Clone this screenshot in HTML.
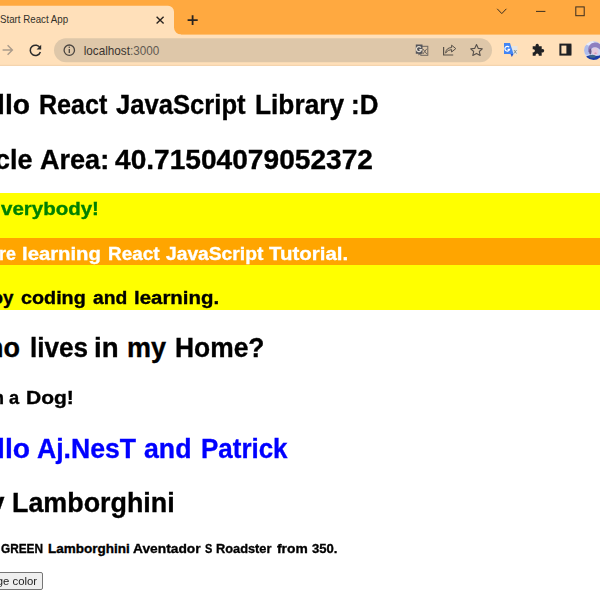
<!DOCTYPE html>
<html><head><meta charset="utf-8"><style>
html,body{margin:0;padding:0;width:600px;height:600px;overflow:hidden;background:#fff;position:relative}
.ln,.lnr{position:absolute;font-family:"Liberation Sans",sans-serif;white-space:pre;line-height:1;transform-origin:0 0}
.ln{font-weight:bold;-webkit-text-stroke-color:currentColor}
.lnr{font-weight:normal;color:#222!important}
.pre{position:absolute;right:100%;top:0}
</style></head><body>
<svg style="position:absolute;left:0;top:0" width="600" height="66" viewBox="0 0 600 66">
<rect x="0" y="0" width="600" height="35" fill="#ffa940"/>
<rect x="0" y="34.6" width="600" height="31.4" fill="#ffe0ba"/>
<path d="M-10 36 L-10 5.7 L168 5.7 A6 6 0 0 1 174 11.7 L174 27.6 A7 7 0 0 0 181 34.6 L181 36 Z" fill="#ffe0ba"/>
<rect x="0" y="64.8" width="600" height="1" fill="#f2d2ab"/>
<rect x="54" y="38.3" width="438" height="24" rx="12" fill="#dec7a9"/>
<!-- tab title -->
<text x="0" y="23.5" transform="scale(0.975,1)" font-family="Liberation Sans" font-size="10" fill="#333029">Start React App</text>
<!-- close x -->
<path d="M156.6 16.8 L163.6 23.6 M163.6 16.8 L156.6 23.6" stroke="#2a2420" stroke-width="1.4" fill="none"/>
<!-- new tab + -->
<path d="M187.6 20.1 H197.7 M192.6 15.2 V25" stroke="#2a2420" stroke-width="1.8" fill="none"/>
<!-- window controls -->
<path d="M497.2 8.8 L501.8 13.6 L506.4 8.8" stroke="#3b2e20" stroke-width="1" fill="none"/>
<path d="M536 11.4 H545.4" stroke="#3b2e20" stroke-width="1" fill="none"/>
<rect x="575.8" y="6.9" width="8.4" height="8.8" stroke="#3b2e20" stroke-width="1" fill="none"/>
<!-- forward arrow -->
<path d="M2.6 50 H12.4 M7.6 45.2 L12.4 50 L7.6 54.8" stroke="#ab9c8c" stroke-width="1.4" fill="none"/>
<!-- reload -->
<path d="M40.2 48.2 A5.2 5.2 0 1 0 40.4 52" stroke="#2b2b2b" stroke-width="1.5" fill="none"/>
<path d="M41.2 44.8 L41.2 49.4 L36.6 49.4 Z" fill="#2b2b2b"/>
<!-- info icon -->
<circle cx="69.3" cy="50.2" r="5.2" stroke="#4a4540" stroke-width="1.3" fill="none"/>
<rect x="68.65" y="49" width="1.3" height="4" fill="#4a4540"/>
<rect x="68.65" y="46.6" width="1.3" height="1.3" fill="#4a4540"/>
<!-- url -->
<text x="90" y="54.6" transform="scale(0.93,1)" font-family="Liberation Sans" font-size="12.6" fill="#3a3430">localhost<tspan fill="#625a52">:3000</tspan></text>
<!-- translate omnibox icon -->
<rect x="420.8" y="46.3" width="7" height="9" stroke="#6b6560" stroke-width="1" fill="none"/>
<path d="M415.8 44.6 H422.5 V53.7 H420.5 L418.5 55.5 V53.7 H415.8 Z" fill="#55555a"/>
<path d="M420.9 47.6 A2.5 2.5 0 1 0 421.4 49.6 H419.3" stroke="#e4dccf" stroke-width="1.2" fill="none"/>
<path d="M422.8 48.8 L426.8 54 M426.8 48.8 L422.8 54" stroke="#6b6560" stroke-width="1"/>
<!-- share -->
<path d="M443.6 47 V55 H453.2" stroke="#575048" stroke-width="1.2" fill="none"/>
<path d="M445.6 53 Q446.2 47.6 451.6 47.6 L451.6 45.2 L455.8 48.6 L451.6 52 L451.6 49.6 Q447.8 49.6 445.6 53 Z" stroke="#575048" stroke-width="1" fill="none" stroke-linejoin="round"/>
<!-- star -->
<path d="M476.5 44.6 L478.3 48.4 L482.3 48.8 L479.3 51.5 L480.2 55.4 L476.5 53.4 L472.8 55.4 L473.7 51.5 L470.7 48.8 L474.7 48.4 Z" stroke="#57504a" stroke-width="1.1" fill="none" stroke-linejoin="round"/>
<!-- google translate ext -->
<path d="M511.5 46 H517.5 V54.5 H511.5 Z" fill="#e6e6e6"/>
<path d="M514 50 L516.5 53.5 M516.5 50 L514 53.5" stroke="#7a8a8a" stroke-width="0.9"/>
<path d="M504 43 H510 L513.5 54 H504 Z" fill="#4285f4"/>
<path d="M510.5 54 H513.5 L511.8 57 Z" fill="#2a56c6"/>
<path d="M509.2 47.2 A2.4 2.4 0 1 0 509.6 49.4 H507.6" stroke="#fff" stroke-width="1.2" fill="none"/>
<!-- puzzle -->
<path d="M532.7 46.3 H535.7 A1.7 1.7 0 1 1 538.7 46.3 H541.7 V49.3 A1.7 1.7 0 1 1 541.7 52.3 V55.7 H538.7 A1.6 1.6 0 1 0 535.7 55.7 H532.7 V52.3 A1.6 1.6 0 1 0 532.7 49.3 Z" fill="#202124"/>
<!-- sidebar -->
<rect x="560.4" y="44.6" width="10" height="10" stroke="#202124" stroke-width="2" fill="none"/>
<rect x="566.4" y="44.6" width="4.8" height="10" fill="#202124"/>
<!-- avatar -->
<defs>
<clipPath id="av"><circle cx="593.5" cy="50.5" r="9.5"/></clipPath>
<radialGradient id="avbg" cx="0.3" cy="0.3" r="0.8"><stop offset="0" stop-color="#e8eefa"/><stop offset="1" stop-color="#8fa6d8"/></radialGradient>
</defs>
<filter id="avb" x="580" y="38" width="26" height="26" filterUnits="userSpaceOnUse"><feGaussianBlur stdDeviation="0.6"/></filter>
<g clip-path="url(#av)"><g filter="url(#avb)">
<rect x="582" y="39" width="23" height="23" fill="#cdd6f2"/>
<ellipse cx="587" cy="50" rx="3" ry="5" fill="#aebbea"/>
<ellipse cx="590" cy="43" rx="4" ry="2.5" fill="#e6eafa"/>
<path d="M588 52 Q587.5 43 595 42.5 Q601 42.5 602 48 L602 52 Q598 46 593 47.5 Q590 49 590.5 53 Z" fill="#8e7fbf"/>
<ellipse cx="595" cy="51.5" rx="3.3" ry="3.8" fill="#e3cade"/>
<ellipse cx="595.5" cy="53.2" rx="1.2" ry="0.6" fill="#d88aa6"/>
<ellipse cx="590.3" cy="51.5" rx="1.2" ry="3" fill="#6c5a8a"/>
<path d="M584 58 Q588 54.5 592 55.5 Q597 57 603 54 V62 H584 Z" fill="#1c3ca6"/>
<ellipse cx="592.5" cy="56.3" rx="3.2" ry="1.5" fill="#3e6688"/>
</g></g>
</svg>

<div style="position:absolute;left:0;top:193.2px;width:600px;height:116.6px;background:#ffff00"></div>
<div style="position:absolute;left:0;top:238px;width:600px;height:27.1px;background:#ffa500"></div>
<div class="ln" style="left:4.90px;top:91.80px;font-size:27px;color:#000;transform:scaleX(1.048);-webkit-text-stroke-width:0.35px"><span class="pre">Hel</span>lo</div>
<div class="ln" style="left:38.57px;top:91.80px;font-size:27px;color:#000;transform:scaleX(0.929);-webkit-text-stroke-width:0.35px">React</div>
<div class="ln" style="left:115.70px;top:91.80px;font-size:27px;color:#000;transform:scaleX(0.949);-webkit-text-stroke-width:0.35px">JavaScript</div>
<div class="ln" style="left:254.73px;top:91.80px;font-size:27px;color:#000;transform:scaleX(0.974);-webkit-text-stroke-width:0.35px">Library</div>
<div class="ln" style="left:351.38px;top:91.80px;font-size:27px;color:#000;transform:scaleX(0.962);-webkit-text-stroke-width:0.35px">:D</div>
<div class="ln" style="left:10.41px;top:146.60px;font-size:27px;color:#000;transform:scaleX(0.995);-webkit-text-stroke-width:0.35px"><span class="pre">Circ</span>le</div>
<div class="ln" style="left:39.90px;top:146.60px;font-size:27px;color:#000;transform:scaleX(1.002);-webkit-text-stroke-width:0.35px">Area:</div>
<div class="ln" style="left:115.30px;top:146.60px;font-size:27px;color:#000;transform:scaleX(1.041);-webkit-text-stroke-width:0.35px">40.71504079052372</div>
<div class="ln" style="left:0.50px;top:200.00px;font-size:18.8px;color:#008000;transform:scaleX(1.091);-webkit-text-stroke-width:0.35px">verybody!</div>
<div class="ln" style="left:5.50px;top:244.80px;font-size:18.8px;color:#fff;transform:scaleX(0.950);-webkit-text-stroke-width:0.35px"><span class="pre">We ar</span>e</div>
<div class="ln" style="left:21.72px;top:244.80px;font-size:18.8px;color:#fff;transform:scaleX(1.080);-webkit-text-stroke-width:0.35px">learning</div>
<div class="ln" style="left:107.99px;top:244.80px;font-size:18.8px;color:#fff;transform:scaleX(1.006);-webkit-text-stroke-width:0.35px">React</div>
<div class="ln" style="left:165.70px;top:244.80px;font-size:18.8px;color:#fff;transform:scaleX(1.024);-webkit-text-stroke-width:0.35px">JavaScript</div>
<div class="ln" style="left:269.00px;top:244.80px;font-size:18.8px;color:#fff;transform:scaleX(1.090);-webkit-text-stroke-width:0.35px">Tutorial.</div>
<div class="ln" style="left:3.00px;top:288.50px;font-size:18.8px;color:#000;transform:scaleX(1.000);-webkit-text-stroke-width:0.35px"><span class="pre">Enjo</span>y</div>
<div class="ln" style="left:20.50px;top:288.50px;font-size:18.8px;color:#000;transform:scaleX(1.052);-webkit-text-stroke-width:0.35px">coding</div>
<div class="ln" style="left:92.80px;top:288.50px;font-size:18.8px;color:#000;transform:scaleX(1.027);-webkit-text-stroke-width:0.35px">and</div>
<div class="ln" style="left:134.31px;top:288.50px;font-size:18.8px;color:#000;transform:scaleX(1.087);-webkit-text-stroke-width:0.35px">learning.</div>
<div class="ln" style="left:3.50px;top:335.00px;font-size:27px;color:#000;transform:scaleX(1.000);-webkit-text-stroke-width:0.35px"><span class="pre">Wh</span>o</div>
<div class="ln" style="left:29.86px;top:335.00px;font-size:27px;color:#000;transform:scaleX(0.968);-webkit-text-stroke-width:0.35px">lives</div>
<div class="ln" style="left:93.95px;top:335.00px;font-size:27px;color:#000;transform:scaleX(1.024);-webkit-text-stroke-width:0.35px">in</div>
<div class="ln" style="left:127.00px;top:335.00px;font-size:27px;color:#000;transform:scaleX(1.000);-webkit-text-stroke-width:0.35px">my</div>
<div class="ln" style="left:174.52px;top:335.00px;font-size:27px;color:#000;transform:scaleX(0.978);-webkit-text-stroke-width:0.35px">Home?</div>
<div class="ln" style="left:9.30px;top:389.30px;font-size:18.8px;color:#000;transform:scaleX(0.973);-webkit-text-stroke-width:0.35px"><span class="pre">I'm </span>a</div>
<div class="ln" style="left:26.18px;top:389.30px;font-size:18.8px;color:#000;transform:scaleX(1.118);-webkit-text-stroke-width:0.35px">Dog!</div>
<div class="ln" style="left:4.90px;top:435.50px;font-size:27px;color:#00f;transform:scaleX(1.048);-webkit-text-stroke-width:0.35px"><span class="pre">Hel</span>lo</div>
<div class="ln" style="left:36.52px;top:435.50px;font-size:27px;color:#00f;transform:scaleX(0.985);-webkit-text-stroke-width:0.35px">Aj.NesT</div>
<div class="ln" style="left:144.01px;top:435.50px;font-size:27px;color:#00f;transform:scaleX(0.989);-webkit-text-stroke-width:0.35px">and</div>
<div class="ln" style="left:201.04px;top:435.50px;font-size:27px;color:#00f;transform:scaleX(0.961);-webkit-text-stroke-width:0.35px">Patrick</div>
<div class="ln" style="left:11.50px;top:490.00px;font-size:27px;color:#000;transform:scaleX(0.995);-webkit-text-stroke-width:0.35px"><span class="pre">My </span>Lamborghini</div>
<div class="ln" style="left:1.00px;top:541.50px;font-size:13.5px;color:#000;transform:scaleX(0.875);-webkit-text-stroke-width:0.35px">GREEN</div>
<div class="ln" style="left:48.00px;top:541.50px;font-size:13.5px;color:#000;transform:scaleX(1.000);-webkit-text-stroke-width:0.35px">Lamborghini</div>
<div class="ln" style="left:133.30px;top:541.50px;font-size:13.5px;color:#000;transform:scaleX(1.021);-webkit-text-stroke-width:0.35px">Aventador</div>
<div class="ln" style="left:204.70px;top:541.50px;font-size:13.5px;color:#000;transform:scaleX(0.811);-webkit-text-stroke-width:0.35px">S</div>
<div class="ln" style="left:216.05px;top:541.50px;font-size:13.5px;color:#000;transform:scaleX(0.948);-webkit-text-stroke-width:0.35px">Roadster</div>
<div class="ln" style="left:277.00px;top:541.50px;font-size:13.5px;color:#000;transform:scaleX(1.023);-webkit-text-stroke-width:0.35px">from</div>
<div class="ln" style="left:311.80px;top:541.50px;font-size:13.5px;color:#000;transform:scaleX(0.969);-webkit-text-stroke-width:0.35px">350.</div>
<div style="position:absolute;left:-40px;top:572.2px;width:81px;height:15.8px;background:#efefef;border:1px solid #767676;border-radius:2px"></div>
<div class="lnr" style="left:2.50px;top:575.50px;font-size:10.5px;color:#000;transform:scaleX(1.081)"><span class="pre">Chang</span>e color</div>
</body></html>
